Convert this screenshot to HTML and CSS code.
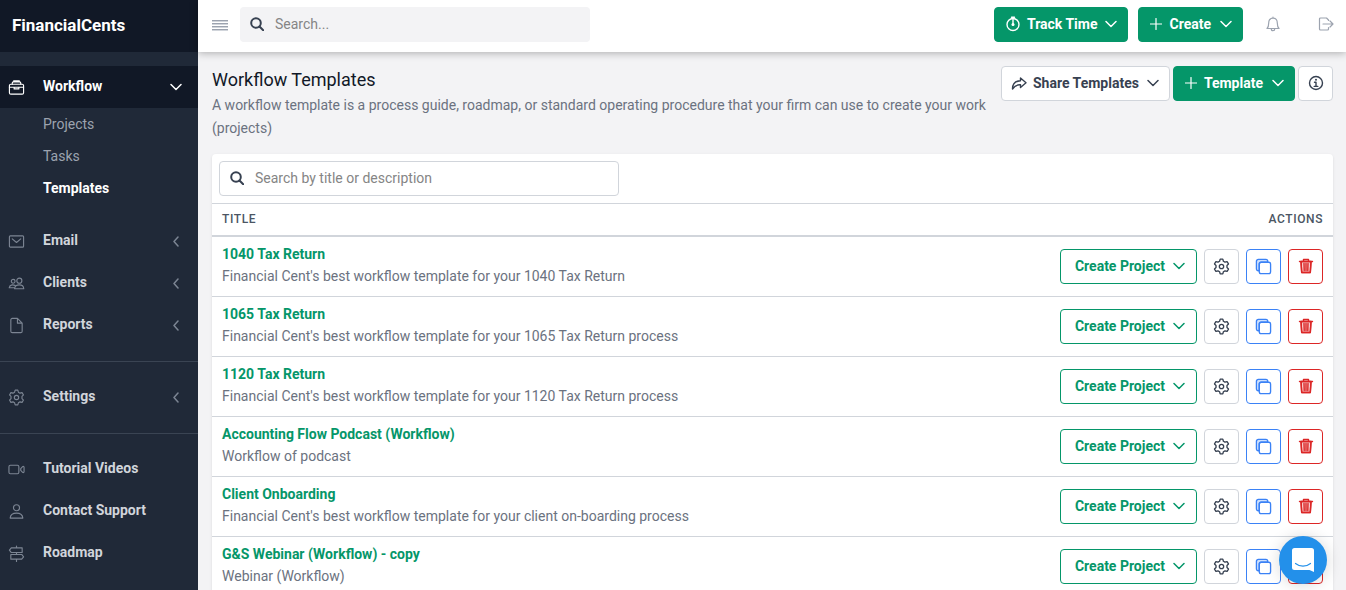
FILE: index.html
```html
<!DOCTYPE html>
<html lang="en">
<head>
<meta charset="UTF-8" />
<meta name="viewport" content="width=device-width, initial-scale=1" />
<title>Workflow Templates - FinancialCents</title>
<link rel="stylesheet" href="styles.css">
</head>
<body>
  <!-- Icons -->
  <svg class="sprite" aria-hidden="true">
    <symbol id="i-briefcase" viewBox="0 0 18 18">
      <rect x="1.5" y="5.5" width="15" height="10.5" rx="1.5" />
      <path d="M4.5 5.5V4.300A1.3 1.3 0 0 1 5.800 3h6.400a1.3 1.3 0 0 1 1.300 1.300v1.200M6 3V2h6v1M1.500 8.700h15M6.500 8.700v1.800h5V8.700" />
    </symbol>
    <symbol id="i-mail" viewBox="0 0 18 18">
      <rect x="1.5" y="3" width="15" height="12" rx="1" />
      <path d="M4.5 6.200 9 10l4.500-3.800" />
    </symbol>
    <symbol id="i-people" viewBox="0 0 18 18">
      <circle cx="12" cy="6" r="2.700" />
      <circle cx="5.500" cy="6.700" r="2" />
      <path d="M7 14.500c.2-2.800 2.200-4 5-4s4.500 1.200 4.700 4zM7.300 11c-2.500-1-5.500-.5-6 2.500h5" />
    </symbol>
    <symbol id="i-file" viewBox="0 0 18 18">
      <path d="M4.500 1.500h5.500l5 5v8.500a1.500 1.500 0 0 1-1.500 1.500h-9A1.500 1.500 0 0 1 3 15V3a1.500 1.500 0 0 1 1.500-1.500zM10 1.500v5h5" />
    </symbol>
    <symbol id="i-gear" viewBox="0 0 18 18">
      <circle cx="9" cy="9" r="2.300" />
      <path d="M7.600 1.200h2.800l.6 2.200 1.700 1 2.200-.6 1.500 2.500-1.600 1.600v2.200l1.600 1.600-1.500 2.500-2.200-.6-1.700 1-.6 2.200H7.600L7 14.600l-1.700-1-2.200.6-1.500-2.500 1.600-1.600V7.900L1.600 6.300l1.500-2.500 2.200.6 1.700-1z" />
    </symbol>
    <symbol id="i-video" viewBox="0 0 18 18">
      <rect x="1" y="4.500" width="10.500" height="9" rx="1.500" />
      <path d="M13.500 8l2-2c.6-.5 1.500-.2 1.500.6v4.800c0 .8-.9 1.100-1.500.6l-2-2z" />
    </symbol>
    <symbol id="i-person" viewBox="0 0 18 18">
      <circle cx="9" cy="5" r="3.200" />
      <path d="M2.300 16c.3-3.700 2.700-5.300 6.700-5.300s6.400 1.600 6.700 5.300z" />
    </symbol>
    <symbol id="i-sign" viewBox="0 0 18 18">
      <path d="M9 1v2M9 8v2M9 15v2.500M3.500 3H15v5H3.500L1.500 5.500zM3 10h11.500l2 2.500-2 2.500H3z" />
    </symbol>
    <symbol id="i-down" viewBox="0 0 12 12">
      <path d="M1 3.500l5 5 5-5" />
    </symbol>
    <symbol id="i-left" viewBox="0 0 12 12">
      <path d="M8 2L4 6.500 8 11" />
    </symbol>
    <symbol id="i-search" viewBox="0 0 14 14">
      <circle cx="6" cy="6" r="4.800" />
      <path d="M9.500 9.500l3.700 3.700" />
    </symbol>
    <symbol id="i-plus" viewBox="0 0 12 12">
      <path d="M6 .5v11M.5 6h11" />
    </symbol>
    <symbol id="i-timer" viewBox="0 0 16 16">
      <circle cx="8" cy="8.500" r="6" />
      <path d="M6.500 1.200h3M8 1.500V9" />
      <circle cx="8" cy="8.500" r="1.500" class="solid" />
    </symbol>
    <symbol id="i-bell" viewBox="0 0 16 16">
      <path d="M8 1v1.200M2 12.500c1.500-1.500 1.700-2.800 1.700-5.500C3.700 4 5.300 2.200 8 2.200S12.300 4 12.300 7c0 2.700.2 4 1.700 5.500zM6.200 12.700c0 2.600 3.600 2.600 3.600 0" />
    </symbol>
    <symbol id="i-logout" viewBox="0 0 16 16">
      <path d="M10.500 4.500V4L8.500 2h-6a1 1 0 0 0-1 1v10a1 1 0 0 0 1 1h7a1 1 0 0 0 1-1v-1.500M5 8h10M12 5l3 3-3 3" />
    </symbol>
    <symbol id="i-share" viewBox="0 0 16 16">
      <path d="M9.500 3l5.500 4.800-5.500 4.700V9.800C5.500 9.500 3.500 11 1.500 14c0-5 3-8 8-8.300z" />
    </symbol>
    <symbol id="i-info" viewBox="0 0 16 16">
      <circle cx="8" cy="8" r="6.500" />
      <path d="M6.500 7.200H8v4M6.200 11.400h3.600" />
      <circle cx="8" cy="4.800" r="1" class="solid" />
    </symbol>
    <symbol id="i-copy" viewBox="0 0 18 18">
      <path class="tint" d="M4.500 13.500h-1a2 2 0 0 1-2-2v-8a2 2 0 0 1 2-2h8a2 2 0 0 1 2 2v1h-7a2 2 0 0 0-2 2z" />
      <rect x="4.500" y="4.500" width="12" height="12" rx="2" />
    </symbol>
    <symbol id="i-trash" viewBox="0 0 16 16">
      <path class="tint" d="M3 3.500l.7 11h8.600l.7-11z" />
      <path d="M1.500 3.500h13M5.500 3.500v-2h5v2M3 3.500l.7 11h8.600l.7-11M6 5.500l.2 7M8 5.500v7M10 5.500l-.2 7" />
    </symbol>
  </svg>

  <div class="app">
    <aside class="sidebar">
      <a class="brand" href="#">FinancialCents</a>

      <nav aria-label="Main navigation">
        <ul class="menu">
          <li>
            <a class="menu-link active" href="#"><svg class="icon"><use href="#i-briefcase" /></svg><span>Workflow</span><svg class="arrow"><use href="#i-down" /></svg></a>
            <ul class="submenu">
              <li><a href="#">Projects</a></li>
              <li><a href="#">Tasks</a></li>
              <li><a class="current" href="#" aria-current="page">Templates</a></li>
            </ul>
          </li>
          <li><a class="menu-link" href="#"><svg class="icon"><use href="#i-mail" /></svg><span>Email</span><svg class="arrow"><use href="#i-left" /></svg></a></li>
          <li><a class="menu-link" href="#"><svg class="icon"><use href="#i-people" /></svg><span>Clients</span><svg class="arrow"><use href="#i-left" /></svg></a></li>
          <li><a class="menu-link" href="#"><svg class="icon"><use href="#i-file" /></svg><span>Reports</span><svg class="arrow"><use href="#i-left" /></svg></a></li>
        </ul>
        <ul class="menu">
          <li><a class="menu-link" href="#"><svg class="icon"><use href="#i-gear" /></svg><span>Settings</span><svg class="arrow"><use href="#i-left" /></svg></a></li>
        </ul>
        <ul class="menu">
          <li><a class="menu-link" href="#"><svg class="icon"><use href="#i-video" /></svg><span>Tutorial Videos</span></a></li>
          <li><a class="menu-link" href="#"><svg class="icon"><use href="#i-person" /></svg><span>Contact Support</span></a></li>
          <li><a class="menu-link" href="#"><svg class="icon"><use href="#i-sign" /></svg><span>Roadmap</span></a></li>
        </ul>
      </nav>
    </aside>

    <div class="page">
      <header class="topbar">
        <button class="menu-toggle" type="button" aria-label="Toggle menu"><span></span><span></span><span></span><span></span></button>
        <label class="search search-global">
          <svg class="icon-search"><use href="#i-search" /></svg>
          <input type="text" placeholder="Search..." aria-label="Search" />
        </label>
        <div class="topbar-actions">
          <button class="btn btn-green" type="button"><svg class="icon-sm"><use href="#i-timer" /></svg>Track Time<svg class="caret"><use href="#i-down" /></svg></button>
          <button class="btn btn-green btn-add" type="button"><svg class="icon-plus"><use href="#i-plus" /></svg>Create<svg class="caret"><use href="#i-down" /></svg></button>
          <button class="btn-plain" type="button" aria-label="Notifications"><svg class="icon-sm"><use href="#i-bell" /></svg></button>
          <button class="btn-plain" type="button" aria-label="Log out"><svg class="icon-sm"><use href="#i-logout" /></svg></button>
        </div>
      </header>

      <main class="content">
        <div class="page-head">
          <div class="page-title">
            <h1>Workflow Templates</h1>
            <p>A workflow template is a process guide, roadmap, or standard operating procedure that your firm can use to create your work (projects)</p>
          </div>
          <div class="page-actions">
            <button class="btn btn-white btn-share" type="button"><svg class="icon-sm"><use href="#i-share" /></svg>Share Templates<svg class="caret"><use href="#i-down" /></svg></button>
            <button class="btn btn-green btn-add" type="button"><svg class="icon-plus"><use href="#i-plus" /></svg>Template<svg class="caret"><use href="#i-down" /></svg></button>
            <button class="btn btn-white btn-icon" type="button" aria-label="Info"><svg class="icon-sm"><use href="#i-info" /></svg></button>
          </div>
        </div>

        <section class="card">
          <div class="card-search">
            <label class="search search-table">
              <svg class="icon-search"><use href="#i-search" /></svg>
              <input type="text" placeholder="Search by title or description" aria-label="Search by title or description" />
            </label>
          </div>
          <table>
            <thead>
              <tr><th scope="col">TITLE</th><th scope="col">ACTIONS</th></tr>
            </thead>
            <tbody>
              <tr>
                <td><a href="#">1040 Tax Return</a><p>Financial Cent's best workflow template for your 1040 Tax Return</p></td>
                <td>
                  <div class="row-actions">
                    <button class="btn btn-outline" type="button">Create Project<svg class="caret"><use href="#i-down" /></svg></button>
                    <button class="btn btn-white btn-icon" type="button" aria-label="Settings"><svg class="icon"><use href="#i-gear" /></svg></button>
                    <button class="btn btn-blue btn-icon" type="button" aria-label="Copy"><svg class="icon"><use href="#i-copy" /></svg></button>
                    <button class="btn btn-red btn-icon" type="button" aria-label="Delete"><svg class="icon-sm"><use href="#i-trash" /></svg></button>
                  </div>
                </td>
              </tr>
              <tr>
                <td><a href="#">1065 Tax Return</a><p>Financial Cent's best workflow template for your 1065 Tax Return process</p></td>
                <td>
                  <div class="row-actions">
                    <button class="btn btn-outline" type="button">Create Project<svg class="caret"><use href="#i-down" /></svg></button>
                    <button class="btn btn-white btn-icon" type="button" aria-label="Settings"><svg class="icon"><use href="#i-gear" /></svg></button>
                    <button class="btn btn-blue btn-icon" type="button" aria-label="Copy"><svg class="icon"><use href="#i-copy" /></svg></button>
                    <button class="btn btn-red btn-icon" type="button" aria-label="Delete"><svg class="icon-sm"><use href="#i-trash" /></svg></button>
                  </div>
                </td>
              </tr>
              <tr>
                <td><a href="#">1120 Tax Return</a><p>Financial Cent's best workflow template for your 1120 Tax Return process</p></td>
                <td>
                  <div class="row-actions">
                    <button class="btn btn-outline" type="button">Create Project<svg class="caret"><use href="#i-down" /></svg></button>
                    <button class="btn btn-white btn-icon" type="button" aria-label="Settings"><svg class="icon"><use href="#i-gear" /></svg></button>
                    <button class="btn btn-blue btn-icon" type="button" aria-label="Copy"><svg class="icon"><use href="#i-copy" /></svg></button>
                    <button class="btn btn-red btn-icon" type="button" aria-label="Delete"><svg class="icon-sm"><use href="#i-trash" /></svg></button>
                  </div>
                </td>
              </tr>
              <tr>
                <td><a href="#">Accounting Flow Podcast (Workflow)</a><p>Workflow of podcast</p></td>
                <td>
                  <div class="row-actions">
                    <button class="btn btn-outline" type="button">Create Project<svg class="caret"><use href="#i-down" /></svg></button>
                    <button class="btn btn-white btn-icon" type="button" aria-label="Settings"><svg class="icon"><use href="#i-gear" /></svg></button>
                    <button class="btn btn-blue btn-icon" type="button" aria-label="Copy"><svg class="icon"><use href="#i-copy" /></svg></button>
                    <button class="btn btn-red btn-icon" type="button" aria-label="Delete"><svg class="icon-sm"><use href="#i-trash" /></svg></button>
                  </div>
                </td>
              </tr>
              <tr>
                <td><a href="#">Client Onboarding</a><p>Financial Cent's best workflow template for your client on-boarding process</p></td>
                <td>
                  <div class="row-actions">
                    <button class="btn btn-outline" type="button">Create Project<svg class="caret"><use href="#i-down" /></svg></button>
                    <button class="btn btn-white btn-icon" type="button" aria-label="Settings"><svg class="icon"><use href="#i-gear" /></svg></button>
                    <button class="btn btn-blue btn-icon" type="button" aria-label="Copy"><svg class="icon"><use href="#i-copy" /></svg></button>
                    <button class="btn btn-red btn-icon" type="button" aria-label="Delete"><svg class="icon-sm"><use href="#i-trash" /></svg></button>
                  </div>
                </td>
              </tr>
              <tr>
                <td><a href="#">G&amp;S Webinar (Workflow) - copy</a><p>Webinar (Workflow)</p></td>
                <td>
                  <div class="row-actions">
                    <button class="btn btn-outline" type="button">Create Project<svg class="caret"><use href="#i-down" /></svg></button>
                    <button class="btn btn-white btn-icon" type="button" aria-label="Settings"><svg class="icon"><use href="#i-gear" /></svg></button>
                    <button class="btn btn-blue btn-icon" type="button" aria-label="Copy"><svg class="icon"><use href="#i-copy" /></svg></button>
                    <button class="btn btn-red btn-icon" type="button" aria-label="Delete"><svg class="icon-sm"><use href="#i-trash" /></svg></button>
                  </div>
                </td>
              </tr>
            </tbody>
          </table>
        </section>
      </main>
    </div>
  </div>

  <button class="chat" type="button" aria-label="Open chat">
    <svg viewBox="0 0 24 26">
      <path class="chat-bubble" d="M3.500 1h17A2.500 2.500 0 0 1 23 3.500V25l-4.500-2h-15A2.500 2.500 0 0 1 1 20.500v-17A2.500 2.500 0 0 1 3.500 1z" />
      <path class="chat-smile" d="M4.500 16.500c4.500 3.500 10.500 3.500 15 0" />
    </svg>
  </button>
</body>
</html>
```

FILE: styles.css
```css
*,
*::before,
*::after {
  box-sizing: border-box;
}

body {
  margin: 0;
  font-family: Roboto, "Liberation Sans", sans-serif;
  font-size: 14px;
  line-height: 22px;
  color: #6b7280;
  background-color: #f3f3f5;
}

ul {
  list-style: none;
  margin: 0;
  padding: 0;
}

h1,
p {
  margin: 0;
}

a {
  color: inherit;
  text-decoration: none;
}

button,
input {
  font: inherit;
}

button {
  cursor: pointer;
}

/* Icons */
.sprite {
  position: absolute;
  width: 0;
  height: 0;
}

svg {
  flex: none;
  fill: none;
  stroke: currentColor;
  stroke-width: 1.2;
  stroke-linejoin: round;
  stroke-linecap: round;
}

.solid {
  fill: currentColor;
  stroke: none;
}

.tint {
  fill: currentColor;
  fill-opacity: 0.25;
}

.icon {
  width: 17px;
  height: 17px;
}

.icon-sm {
  width: 16px;
  height: 16px;
}

.icon-search {
  width: 14px;
  height: 14px;
  stroke-width: 2;
}

.icon-plus,
.caret,
.arrow {
  width: 12px;
  height: 12px;
}

.caret,
.arrow {
  stroke-width: 1.5;
}

/* Layout */
.app {
  display: flex;
  height: 100vh;
}

.page {
  flex: 1;
  min-width: 0;
  display: flex;
  flex-direction: column;
}

/* Sidebar */
.sidebar {
  width: 198px;
  flex: none;
  overflow: hidden;
  background-color: #202938;
  color: #d1d5db;
}

.brand {
  display: flex;
  align-items: center;
  height: 52px;
  margin-bottom: 14px;
  padding: 0 12px 3px;
  background-color: #111826;
  color: #fff;
  font-size: 17px;
  font-weight: 700;
}

.menu + .menu {
  margin-top: 15px;
  padding-top: 14px;
  border-top: 1px solid #3a4453;
}

.menu-link {
  display: flex;
  align-items: center;
  height: 42px;
  padding: 0 16px 0 8px;
  font-weight: 700;
}

.menu-link span {
  flex: 1;
  margin-left: 18px;
  padding-bottom: 2px;
}

.menu-link svg {
  color: #7c8593;
}

.menu-link.active {
  background-color: #111826;
}

.menu-link.active,
.menu-link.active svg,
.submenu .current {
  color: #fff;
}

.submenu {
  padding-bottom: 16px;
}

.submenu a {
  display: block;
  padding-left: 43px;
  line-height: 32px;
  color: #9ca3af;
}

.submenu .current {
  font-weight: 700;
}

/* Top bar */
.topbar {
  display: flex;
  align-items: center;
  height: 52px;
  flex: none;
  padding: 0 0 3px 14px;
  background-color: #fff;
  box-shadow: 0 1px 8px rgba(0, 0, 0, 0.3);
  z-index: 1;
}

.menu-toggle {
  display: flex;
  flex-direction: column;
  gap: 2px;
  width: 16px;
  margin-right: 12px;
  padding: 0;
  border: none;
  background: none;
}

.menu-toggle span {
  height: 1px;
  background-color: #9ca3af;
  box-shadow: 0 1px 0 #d1d5db;
}

.topbar-actions {
  display: flex;
  align-items: center;
  gap: 10px;
  margin-left: auto;
}

/* Search boxes */
.search {
  display: flex;
  align-items: center;
  height: 35px;
  padding: 0 10px 1px;
  border-radius: 4px;
  color: #374151;
}

.search input {
  flex: 1;
  min-width: 0;
  margin-left: 11px;
  padding: 0;
  border: none;
  outline: none;
  background: none;
}

.search input::placeholder {
  color: #858585;
  opacity: 1;
}

.search-global {
  width: 350px;
  background-color: #f3f3f5;
}

.search-table {
  width: 400px;
  border: 1px solid #d1d5db;
}

/* Buttons */
.btn {
  display: flex;
  align-items: center;
  justify-content: center;
  height: 35px;
  gap: 6px;
  padding: 0 10px 1px;
  border: 1px solid #d1d5db;
  border-radius: 4px;
  background-color: #fff;
  font-weight: 700;
  white-space: nowrap;
}

.btn .icon,
.btn .icon-sm {
  stroke-width: 1.4;
}

.btn .caret {
  margin-left: 2px;
}

.btn-white {
  color: #374151;
}

.btn-green {
  border-color: #059669;
  background-color: #059669;
  color: #fff;
}

.btn-add {
  gap: 7px;
  padding-left: 11px;
}

.btn-share {
  padding-left: 9px;
}

.btn-outline {
  padding: 0 11px 1px 14px;
  border-color: #059669;
  color: #059669;
}

.btn-blue {
  border-color: #3b82f6;
  color: #3b82f6;
}

.btn-red {
  border-color: #dc2626;
  color: #dc2626;
}

.btn-icon {
  width: 35px;
  padding: 0 0 1px;
}

.btn-plain {
  display: flex;
  justify-content: center;
  width: 40px;
  padding: 0 0 1px;
  border: none;
  background: none;
  color: #9ca3af;
}

.btn-plain + .btn-plain {
  margin-left: 3px;
}

/* Page heading */
.content {
  flex: 1;
  min-height: 0;
  padding: 14px 13px 0 14px;
  overflow-y: auto;
  scrollbar-width: none;
}

.page-head {
  display: flex;
  align-items: flex-start;
  justify-content: space-between;
  gap: 10px;
  margin-bottom: 14px;
}

.page-title h1 {
  font-size: 18px;
  line-height: 28px;
  font-weight: 400;
  color: #111827;
}

.page-title p {
  line-height: 23px;
}

.page-actions {
  display: flex;
  gap: 3px;
}

/* Templates table */
.card {
  border-radius: 4px;
  background-color: #fff;
  box-shadow: 0 1px 3px rgba(0, 0, 0, 0.1);
}

.card-search {
  padding: 7px;
}

table {
  width: 100%;
  border-spacing: 0;
  border-top: 1px solid #d1d5db;
}

th {
  height: 33px;
  padding: 0 10px 2px;
  border-bottom: 2px solid #d1d5db;
  font-size: 12px;
  line-height: 22px;
  font-weight: 500;
  letter-spacing: 0.05em;
  text-align: left;
  color: #4b5563;
}

th:last-child {
  text-align: right;
}

td {
  padding: 6px 10px 9px;
  border-bottom: 1px solid #d1d5db;
}

td:last-child {
  padding: 0 10px;
}

td a {
  font-weight: 700;
  color: #059669;
}

.row-actions {
  display: flex;
  justify-content: flex-end;
  gap: 7px;
}

/* Chat launcher */
.chat {
  position: fixed;
  right: 19px;
  bottom: 6px;
  display: flex;
  align-items: center;
  justify-content: center;
  width: 48px;
  height: 48px;
  padding: 0;
  border: none;
  border-radius: 50%;
  background-color: #2390ea;
  box-shadow: 0 1px 16px rgba(0, 0, 0, 0.16);
  z-index: 2;
}

.chat svg {
  width: 24px;
  height: 26px;
}

.chat-bubble {
  fill: #fff;
  stroke: none;
}

.chat-smile {
  stroke: #2390ea;
}
```
